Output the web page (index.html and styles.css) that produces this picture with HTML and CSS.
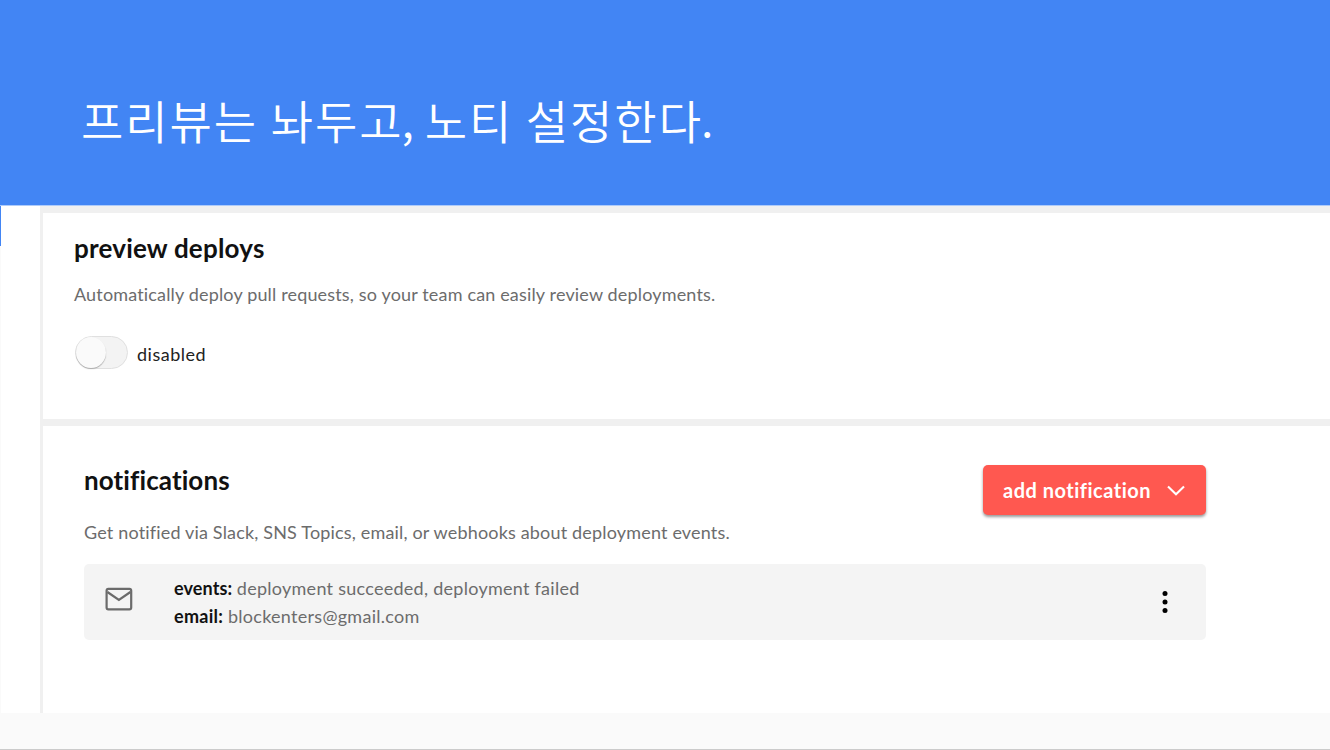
FILE: index.html
```html
<!DOCTYPE html>
<html lang="ko">
<head>
<meta charset="utf-8">
<title>프리뷰는 놔두고, 노티 설정한다.</title>
<link rel="stylesheet" href="styles.css">
</head>
<body>
<div class="slide">
  <header class="banner"><h1 class="title">프리뷰는 놔두<span class="tight">고</span><span class="comma">,</span> 노티 설정한<span class="tight">다</span>.</h1></header>
  <main class="shot">
    <section class="panel previews">
      <h2 class="heading">preview deploys</h2>
      <p class="copy">Automatically deploy pull requests, so your team can easily review deployments.</p>
      <div class="switch-row">
        <span class="switch"><span class="knob"></span></span>
        <span class="switch-label">disabled</span>
      </div>
    </section>
    <section class="panel notifications">
      <div class="section-head">
        <h2 class="heading">notifications</h2>
        <button class="add"><span>add notification</span>
          <svg class="chevron" width="18" height="12" viewBox="0 0 18 12"><path d="M1 2.5 9 10.3l8-7.8" fill="none" stroke="currentColor" stroke-width="2.1"/></svg>
        </button>
      </div>
      <p class="copy">Get notified via Slack, SNS Topics, email, or webhooks about deployment events.</p>
      <div class="item">
        <svg class="mail" width="28" height="24" viewBox="0 0 28 24"><rect x="1.6" y="1.9" width="24.6" height="20.4" rx="1.8" fill="none" stroke="#6b6b6b" stroke-width="2.2"/><path d="M2.4 5 13.9 12.8 25.4 5" fill="none" stroke="#6b6b6b" stroke-width="2.2"/></svg>
        <div class="details">
          <div><b>events:</b> <span class="events-value">deployment succeeded, deployment failed</span></div>
          <div><b class="email-key">email:</b> <span class="email-value">blockenters@gmail.com</span></div>
        </div>
        <svg class="dots" width="6" height="24" viewBox="0 0 6 24"><circle cx="3" cy="3.5" r="2.5"/><circle cx="3" cy="12" r="2.5"/><circle cx="3" cy="20.5" r="2.5"/></svg>
      </div>
    </section>
  </main>
</div>
</body>
</html>
```
FILE: styles.css
```css
* { box-sizing: border-box; }
body { margin: 0; font-family: Lato, "Noto Sans", sans-serif; font-variant-ligatures: none; }
h1, h2, p { margin: 0; }
.slide { height: 750px; overflow: hidden; background: #fafafa; border-bottom: 1px solid #cbcbcb; }
.banner { height: 205px; padding: 84px 0 0 81px; background: #4285f4; }
.title { color: #fff; font: 350 46px/70px "Noto Sans CJK KR", sans-serif; letter-spacing: 1.95px; word-spacing: -2.2px; white-space: nowrap; }
.tight { letter-spacing: 0; }
.comma { letter-spacing: -2px; }
.shot {
  display: grid; grid-template-rows: 206px 1fr; row-gap: 7px;
  height: 508px; padding: 7px 0 0 43px; border-top: 1px solid #aecbfa;
  background: linear-gradient(#4285f4, #4285f4) 0 0 / 1px 40px no-repeat,
    linear-gradient(#fff, #fff) 1px 0 / 39px 100% no-repeat,
    linear-gradient(#fafafa, #fafafa) 0 0 / 1px 100% no-repeat, #f0f0f0;
}
.panel { background: #fff; white-space: nowrap; }
.previews { padding: 19px 31px 0; }
.heading { color: #111; font-size: 26px; font-weight: 700; line-height: 32px; letter-spacing: .2px; }
.copy { color: #6c6c6c; font-size: 18px; line-height: 24px; letter-spacing: .16px; }
.previews .copy { margin-top: 18px; }
.switch-row { display: flex; align-items: center; margin: 30px 0 0 1px; }
.switch { width: 53px; height: 33px; border: 1px solid #e0e0e0; border-radius: 17px; background: #f3f3f3; }
.knob { display: block; width: 30px; height: 31px; border-radius: 50%; background: #fafafa; box-shadow: 0 1px 1px #aaa; }
.switch-label { margin-left: 9px; padding-top: 2px; color: #222; font-size: 18px; letter-spacing: .5px; }
.notifications { padding: 39px 124px 0 41px; }
.section-head { display: flex; justify-content: space-between; height: 56px; }
.section-head .heading { margin-top: -1px; letter-spacing: .1px; }
.notifications .copy { margin-top: -1px; letter-spacing: .17px; }
.add {
  display: flex; align-items: center; justify-content: space-between;
  width: 223px; height: 50px; padding: 0 21px 0 20px; border: 0; border-radius: 5px;
  background: #ff5850; color: #fff; box-shadow: 0 2px 3px #0006;
  font: 700 20px/50px Lato, sans-serif; font-variant-ligatures: none; letter-spacing: .5px;
}
.item {
  display: flex; align-items: center; height: 76px; margin-top: 20px;
  padding: 0 38px 0 21px; border-radius: 5px; background: #f4f4f4;
}
.mail { margin-bottom: 6px; }
.details { flex: 1; margin-left: 41px; color: #6c6c6c; font-size: 18px; line-height: 28px; }
.details b { color: #111; letter-spacing: .1px; }
.details .email-key { letter-spacing: .3px; }
.events-value { letter-spacing: .27px; }
.email-value { letter-spacing: .28px; }
```
